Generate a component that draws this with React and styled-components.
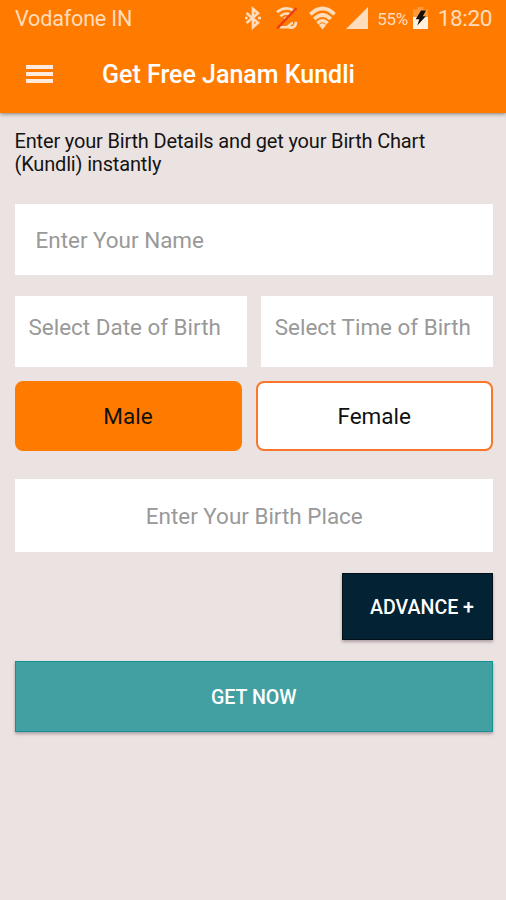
import React from 'react';
import styled, { createGlobalStyle } from 'styled-components';

const colors = {
    orange: '#ff7b00',
    page: '#ebe3e2',
    status: '#ffdcbc',
    hint: '#999',
    navy: '#032234',
    teal: '#43a0a2',
    tealDark: '#109391'
};

const GlobalStyle = createGlobalStyle`
    * {
        box-sizing: border-box;
    }
    body {
        margin: 0;
        background-color: ${colors.page};
        font-family: Roboto, "Liberation Sans", sans-serif;
    }
    button {
        font-family: inherit;
        padding: 0;
        cursor: pointer;
    }
`;

const Screen = styled.div`
    width: 506px;
    height: 900px;
    overflow: hidden;
    background-color: ${colors.page};
`;

const Header = styled.header`
    height: 112.5px;
    color: #fff;
    background-color: ${colors.orange};
    box-shadow: 0 1px 4px rgba(0, 0, 0, 0.45);
`;

const StatusBar = styled.div`
    display: flex;
    align-items: center;
    height: 36px;
    padding: 0 14px 0 15px;
    color: ${colors.status};
    svg {
        display: block;
        flex: none;
    }
`;

const StatusText = styled.span`
    padding-top: 1px;
    font-size: ${props => props.$size}px;
    letter-spacing: ${props => props.$spacing || 0}px;
    line-height: 36px;
    white-space: nowrap;
`;

const StatusIcons = styled.div`
    display: flex;
    align-items: center;
    margin-left: auto;
`;

const Gap = styled.span`
    width: ${props => props.$width}px;
`;

const Toolbar = styled.div`
    display: flex;
    align-items: center;
    height: 76px;
    padding-left: 26px;
`;

const MenuButton = styled.button`
    display: flex;
    flex-direction: column;
    gap: 3px;
    width: 27px;
    margin-right: 49px;
    border: 0;
    background: none;
`;

const MenuLine = styled.span`
    height: 4px;
    background-color: #ffeadb;
`;

const Title = styled.h1`
    margin: 0;
    padding-top: 2px;
    font-size: 25px;
    font-weight: 500;
    line-height: 30px;
`;

const Form = styled.main`
    padding: 17.5px 13px 0 14.5px;
`;

const Intro = styled.p`
    margin: 0;
    height: 74px;
    color: #151313;
    font-size: 20px;
    letter-spacing: -0.17px;
    line-height: 22.5px;
    white-space: nowrap;
`;

const Row = styled.div`
    display: flex;
    gap: 14px;
    margin-top: ${props => props.$top}px;
`;

const Field = styled.div`
    display: flex;
    flex: 1;
    align-items: center;
    justify-content: ${props => props.$center ? 'center' : 'flex-start'};
    height: ${props => props.$height}px;
    padding: ${props => props.$padding || 0};
    color: ${colors.hint};
    background-color: #fff;
    font-size: 22.45px;
    white-space: nowrap;
`;

const GenderButton = styled.button`
    width: ${props => props.$width}px;
    height: 70px;
    border: 2px solid ${props => props.$selected ? colors.orange : '#f9762a'};
    border-radius: 8px;
    color: #111;
    background-color: ${props => props.$selected ? colors.orange : '#fff'};
    font-size: 22.5px;
`;

const ActionButton = styled.button`
    display: block;
    width: ${props => props.$width};
    height: ${props => props.$height}px;
    margin: ${props => props.$margin};
    padding: ${props => props.$padding || 0};
    border: 1px solid ${props => props.$border};
    color: #fff;
    background-color: ${props => props.$background};
    box-shadow: 0 2px 3px rgba(60, 30, 50, 0.35);
    font-size: 19.6px;
    font-weight: 500;
    white-space: nowrap;
`;

const BluetoothIcon = () => (
    <svg width="16" height="24" viewBox="0 0 16 24" fill="none" stroke="currentColor" strokeWidth="2.6">
        <path d="M1.5 7 13 16.8 8 21.2V2.8l5 4.4L1.5 17" />
        <path d="M0 12h2.6M13 12h3" />
    </svg>
);

const SyncOffIcon = () => (
    <svg width="24" height="24" viewBox="0 0 24 24" fill="none" stroke="currentColor" strokeWidth="2.6">
        <path d="M2 6.2Q11-1 20 5.4M5.4 10.2Q10.5 5.8 15 8.6" />
        <path d="M9 12.5 14 11" strokeWidth="2" />
        <path d="M4.5 21.2H11c4 0 3.5-4.2 7-4.2" />
        <path d="M12.5 20.8c5 2 8.5.5 8.5-5" />
        <path d="M2.2 22.3 21.5 2.2" stroke="#ed3d14" strokeWidth="2.4" />
    </svg>
);

const WifiIcon = () => (
    <svg width="27" height="24" viewBox="0 0 27 24" fill="none" stroke="currentColor" strokeWidth="3.8">
        <path d="M1.4 8.4Q13.5-3.2 25.6 8.4M5.2 13Q13.5 4.9 21.8 13" />
        <path d="M8.4 17.2Q13.5 12 18.6 17.2" strokeWidth="3.4" />
        <path d="M9.8 18.9Q13.5 15.6 17.2 18.9L13.5 23.6z" fill="currentColor" stroke="none" />
    </svg>
);

const SignalIcon = () => (
    <svg width="22" height="22" viewBox="0 0 22 22">
        <path d="M0 22 22 0v22z" fill="currentColor" />
    </svg>
);

const BatteryIcon = () => (
    <svg width="15" height="22" viewBox="0 0 15 22">
        <path d="M4.5 0h6v2.5H15V11H0V2.5h4.5z" fill="#ff9a3c" />
        <path d="M0 10h15v12H0z" fill="#fff0df" />
        <path d="M8 3.5h5L9.8 9.2h3L4.3 18.5l2-6.2H2.7z" fill="#17100a" />
    </svg>
);

const App = () => (
    <Screen>
        <GlobalStyle />
        <Header>
            <StatusBar>
                <StatusText $size={21.6} $spacing={-0.2}>Vodafone IN</StatusText>
                <StatusIcons>
                    <BluetoothIcon />
                    <Gap $width={14} />
                    <SyncOffIcon />
                    <Gap $width={10} />
                    <WifiIcon />
                    <Gap $width={10} />
                    <SignalIcon />
                    <Gap $width={9.5} />
                    <StatusText $size={17} $spacing={-0.4}>55%</StatusText>
                    <Gap $width={5} />
                    <BatteryIcon />
                    <Gap $width={10} />
                    <StatusText $size={22.6} $spacing={-0.4}>18:20</StatusText>
                </StatusIcons>
            </StatusBar>
            <Toolbar>
                <MenuButton aria-label="Menu">
                    <MenuLine />
                    <MenuLine />
                    <MenuLine />
                </MenuButton>
                <Title>Get Free Janam Kundli</Title>
            </Toolbar>
        </Header>
        <Form>
            <Intro>
                Enter your Birth Details and get your Birth Chart
                <br />
                (Kundli) instantly
            </Intro>
            <Row $top={0}>
                <Field $height={71} $padding="0 21px">Enter Your Name</Field>
            </Row>
            <Row $top={21}>
                <Field $height={70.5} $padding="0 14px 9px">Select Date of Birth</Field>
                <Field $height={70.5} $padding="0 14px 9px">Select Time of Birth</Field>
            </Row>
            <Row $top={14}>
                <GenderButton $width={227} $selected>Male</GenderButton>
                <GenderButton $width={237.5}>Female</GenderButton>
            </Row>
            <Row $top={28}>
                <Field $height={73.5} $padding="2px 0 0 1px" $center>Enter Your Birth Place</Field>
            </Row>
            <ActionButton
                $width="151px"
                $height={67}
                $margin="21px 0 0 auto"
                $padding="2px 0 0 9px"
                $border="#02101a"
                $background={colors.navy}
            >
                ADVANCE +
            </ActionButton>
            <ActionButton
                $width="100%"
                $height={71}
                $margin="21px 0 0"
                $padding="2px 0 0"
                $border={colors.tealDark}
                $background={colors.teal}
            >
                GET NOW
            </ActionButton>
        </Form>
    </Screen>
);

export default App;
